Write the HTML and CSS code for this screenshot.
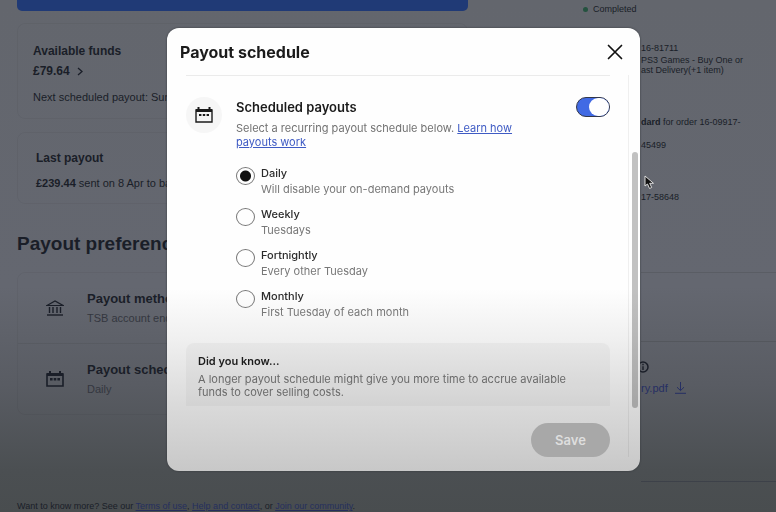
FILE: index.html
```
<!DOCTYPE html>
<html lang="en">
<head>
  <meta charset="UTF-8" />
  <meta name="viewport" content="width=device-width, initial-scale=1.0"/>
  <title>Payouts</title>
  <link rel="stylesheet" href="styles.css">
</head>
<body>

  <!-- Page behind the dialog -->
  <div class="page">
    <main class="funds">
      <button class="withdraw" aria-label="Withdraw funds"></button>

      <section class="card available">
        <h3>Available funds</h3>
        <a class="amount" href="#">£79.64
          <svg width="6" height="9" viewBox="0 0 6 9"><path d="M1 1l4 3.5L1 8" fill="none" stroke="currentColor" stroke-width="1.3"/></svg>
        </a>
        <p>Next scheduled payout: Sunday</p>
      </section>

      <section class="card last">
        <h3>Last payout</h3>
        <p><b>£239.44</b> sent on 8 Apr to bank</p>
      </section>

      <h2>Payout preferences</h2>
      <section class="card prefs">
        <div class="pref">
          <svg width="18" height="16" viewBox="0 0 18 16" fill="none" stroke="currentColor"><path d="M1 5.500L9 1l8 4.500z" stroke-width="1.200"/><path d="M3.500 7v6M7 7v6M11 7v6M14.500 7v6" stroke-width="1.400"/><path d="M1 15h16" stroke-width="1.400"/></svg>
          <div>
            <h4>Payout method</h4>
            <p>TSB account ending</p>
          </div>
        </div>
        <div class="pref">
          <svg width="18" height="16" viewBox="0 0 18 16"><path d="M1 3h16v12H1z" fill="none" stroke="currentColor" stroke-width="1.600"/><path d="M1 2h16v3H1zM3 0h2v3H3zM13 0h2v3h-2zM4 7h2.600v2.400H4zM7.700 7h2.600v2.400H7.700zM11.400 7H14v2.400h-2.600z" fill="currentColor"/></svg>
          <div>
            <h4>Payout schedule</h4>
            <p>Daily</p>
          </div>
        </div>
      </section>

      <p class="more">Want to know more? See our <a href="#">Terms of use</a>, <a href="#">Help and contact</a>, or <a href="#">Join our community</a>.</p>
    </main>

    <aside class="activity">
      <p class="status"><span class="dot"></span>Completed</p>
      <div class="entries">
        <p class="order">16-81711</p>
        <p class="item">PS3 Games - Buy One or<br>ast Delivery(+1 item)</p>
        <p class="label"><b>dard</b> for order 16-09917-</p>
        <p class="ref">45499</p>
        <p class="ref2">17-58648</p>
        <div class="summary">
          <svg width="12" height="12" viewBox="0 0 12 12"><circle cx="6" cy="6" r="5" fill="none" stroke="currentColor" stroke-width="1.500"/><path d="M5.300 2.800h1.400v1.400H5.300zM5.300 5.200h1.400V9H5.300z" fill="currentColor"/></svg>
          <a href="#">ry.pdf
            <svg width="11" height="12" viewBox="0 0 11 12" fill="none" stroke="currentColor"><path d="M5.500 0v8.500M2 5.200l3.500 3.400L9 5.200M0 11.300h11"/></svg>
          </a>
        </div>
      </div>
    </aside>
  </div>

  <!-- Payout schedule dialog -->
  <div class="overlay">
    <div class="modal" role="dialog" aria-labelledby="modalTitle">
      <header class="modal-header">
        <h1 id="modalTitle">Payout schedule</h1>
        <button class="close" aria-label="Close">
          <svg width="16" height="16" viewBox="0 0 16 16"><path d="M1.500 1.500l13 13M14.500 1.500l-13 13" stroke="currentColor" stroke-width="1.700" stroke-linecap="round"/></svg>
        </button>
      </header>

      <div class="modal-main">
        <div class="modal-column">
          <div class="modal-body">
            <div class="schedule">
              <span class="icon">
                <svg width="18" height="16" viewBox="0 0 18 16"><path d="M1 3h16v12H1z" fill="none" stroke="currentColor" stroke-width="1.400"/><path d="M1 2h16v3H1zM2.500 0h2v3h-2zM13.500 0h2v3h-2zM4 7h2.400v2H4zM7.800 7h2.400v2H7.800zM11.600 7H14v2h-2.400z" fill="currentColor"/></svg>
              </span>
              <div class="details">
                <div class="details-top">
                  <label for="scheduled">Scheduled payouts</label>
                  <input type="checkbox" class="switch" id="scheduled" checked>
                </div>
                <p class="intro">Select a recurring payout schedule below. <a href="#">Learn how<br>payouts work</a></p>

                <div class="option">
                  <input type="radio" name="schedule" id="daily" checked>
                  <label for="daily">Daily <small>Will disable your on-demand payouts</small></label>
                </div>
                <div class="option">
                  <input type="radio" name="schedule" id="weekly">
                  <label for="weekly">Weekly <small>Tuesdays</small></label>
                </div>
                <div class="option">
                  <input type="radio" name="schedule" id="fortnightly">
                  <label for="fortnightly">Fortnightly <small>Every other Tuesday</small></label>
                </div>
                <div class="option">
                  <input type="radio" name="schedule" id="monthly">
                  <label for="monthly">Monthly <small>First Tuesday of each month</small></label>
                </div>
              </div>
            </div>

            <div class="tip">
              <h2>Did you know...</h2>
              <p>A longer payout schedule might give you more time to accrue available funds to cover selling costs.</p>
            </div>
          </div>

          <footer class="modal-footer">
            <button class="save" disabled>Save</button>
          </footer>
        </div>
        <div class="track"><div class="thumb"></div></div>
      </div>
    </div>
  </div>

  <!-- Mouse pointer -->
  <svg class="pointer" width="11" height="15" viewBox="0 0 11 15"><path d="M1 1v10l2.500-2 2 4.500 2.200-1-2-4.200H9.500z" fill="#111" stroke="#ddd" stroke-width="1"/></svg>

</body>
</html>
```
FILE: styles.css
```
html, body {
  margin: 0;
  padding: 0;
  height: 100%;
  overflow: hidden;
}

body {
  font-family: "Liberation Sans", Arial, sans-serif;
  font-size: 11px;
  color: #1a1e28;
  background: linear-gradient(#63666d, #646770 56%, #595c63 75%, #4b4f52 92%, #494d4f);
}

h1, h2, h3, h4, p {
  margin: 0;
}

button {
  border: none;
  padding: 0;
  font-family: inherit;
}

/* Page behind the dialog */
.page {
  display: grid;
  grid-template-columns: 5fr 3fr;
  height: 100%;
  overflow: hidden;
}
.funds {
  padding: 0 17px;
  white-space: nowrap;
}
.withdraw {
  display: block;
  width: 100%;
  height: 11px;
  border-radius: 0 0 5px 5px;
  background: #203a76;
}
.card {
  border: 1px solid rgba(0, 0, 0, 0.04);
  border-radius: 8px;
}
.available {
  margin-top: 12px;
  padding: 18px 15px 13px;
}
.available h3 {
  font-size: 12px;
  line-height: 18px;
}
.amount {
  display: block;
  color: inherit;
  font-size: 12px;
  font-weight: bold;
  line-height: 22px;
  text-decoration: none;
}
.amount svg {
  margin-left: 4px;
  vertical-align: -1px;
}
.available p {
  margin-top: 7px;
  line-height: 16px;
}
.last {
  margin-top: 13px;
  padding: 16px 18px 12px;
}
.last h3 {
  font-size: 12px;
  line-height: 18px;
}
.last p {
  margin-top: 8px;
  line-height: 16px;
}
.funds h2 {
  margin-top: 28px;
  font-size: 19px;
  line-height: 24px;
}
.prefs {
  margin-top: 16px;
}
.pref {
  display: flex;
  align-items: center;
  gap: 23px;
  height: 70px;
  padding-left: 28px;
}
.pref + .pref {
  border-top: 1px solid rgba(0, 0, 0, 0.06);
}
.pref h4 {
  font-size: 13px;
  line-height: 18px;
}
.pref p {
  margin-top: 2px;
  line-height: 16px;
  color: #34373f;
}
.more {
  margin-top: 85px;
  font-size: 9px;
  line-height: 12px;
}
.more a {
  color: #252f5e;
}

/* Activity column */
.activity {
  padding-left: 98px;
  font-size: 9px;
  line-height: 10px;
  white-space: nowrap;
}
.status {
  display: flex;
  align-items: center;
  gap: 5px;
  padding-top: 4px;
}
.dot {
  width: 5px;
  height: 5px;
  border-radius: 50%;
  background: #24523f;
}
.entries {
  padding-left: 58px;
}
.order {
  margin-top: 29px;
}
.item {
  margin-top: 2px;
}
.label {
  margin-top: 42px;
}
.ref {
  margin-top: 13px;
}
.ref2 {
  margin-top: 42px;
  padding-bottom: 70px;
  border-bottom: 1px solid #5a5d64;
}
.summary {
  margin-top: 68px;
  padding: 19px 0 85px;
  border-top: 1px solid #54575d;
  border-bottom: 1px solid #3d4149;
}
.summary > svg {
  display: block;
  margin-left: -4px;
}
.summary a {
  display: block;
  margin-top: 7px;
  color: #262f63;
  font-size: 11px;
  line-height: 16px;
  text-decoration: none;
}
.summary a svg {
  margin-left: 4px;
  vertical-align: -2px;
}

/* Dialog */
.overlay {
  position: fixed;
  inset: 0;
  display: flex;
  padding: 28px 136px 41px 167px;
}
.modal {
  flex: 1;
  min-width: 0;
  display: flex;
  flex-direction: column;
  box-sizing: border-box;
  border-radius: 12px;
  background: linear-gradient(#fefefe 59%, #f0f0f0 70%, #dadada 85%, #c8c8c8);
  box-shadow: 0 0 2px #303338;
  color: #1b1b1b;
  font-family: Inter, "Liberation Sans", sans-serif;
}
.modal-header {
  display: flex;
  align-items: center;
  justify-content: space-between;
  height: 47px;
  padding: 0 17px 0 13px;
}
.modal-header h1 {
  font-size: 16px;
  font-weight: 700;
  line-height: 20px;
}
.close {
  display: flex;
  background: none;
  color: #111;
}
.modal-main {
  flex: 1;
  min-height: 0;
  display: flex;
}
.modal-column {
  flex: 1;
  min-width: 0;
  display: flex;
  flex-direction: column;
}
.modal-body {
  flex: 1;
  min-height: 0;
  margin: 0 18px 0 19px;
  border-top: 1px solid #ebebeb;
  overflow: hidden;
}
.schedule {
  display: flex;
  gap: 14px;
  padding-top: 21px;
}
.icon {
  display: flex;
  flex: none;
  align-items: center;
  justify-content: center;
  width: 36px;
  height: 36px;
  border-radius: 50%;
  background: #f6f6f6;
}
.details {
  flex: 1;
}
.details-top {
  display: flex;
  align-items: center;
  justify-content: space-between;
  height: 20px;
}
.details-top label {
  font-size: 13px;
  font-weight: 600;
}
.intro {
  margin: 4px 0 16px;
  font-size: 11px;
  line-height: 14px;
  color: #727272;
}
.intro a {
  color: #3f5bc4;
}

.switch {
  appearance: none;
  display: flex;
  justify-content: flex-end;
  width: 34px;
  height: 20px;
  margin: 0;
  border: 1px solid #33384a;
  border-radius: 10px;
  background: #416ae4;
}
.switch::before {
  content: "";
  width: 20px;
  border-radius: 9px;
  background: #fff;
}

.option {
  display: flex;
  gap: 6px;
  height: 41px;
}
.option input {
  appearance: none;
  flex: none;
  width: 19px;
  height: 18px;
  margin: 2px 0 0;
  border: 1px solid #777;
  border-radius: 50%;
}
.option input:checked {
  background: radial-gradient(circle, #111 5px, transparent 6px);
}
.option label {
  font-size: 11px;
  font-weight: 500;
  line-height: 16px;
  color: #2b2b2b;
}
.option small {
  display: block;
  font-size: 11px;
  font-weight: 400;
  color: #777;
}

.tip {
  margin-top: 14px;
  padding: 10px 12px 20px;
  border-radius: 8px;
  background: rgba(0, 0, 0, 0.03);
}
.tip h2 {
  font-size: 11px;
  font-weight: 600;
  line-height: 16px;
}
.tip p {
  margin-top: 4px;
  font-size: 11px;
  line-height: 13px;
  color: #6a6a6a;
}

.modal-footer {
  display: flex;
  justify-content: flex-end;
  padding: 17px 18px 14px;
}
.save {
  width: 79px;
  height: 34px;
  border-radius: 17px;
  background: #a8a8a8;
  color: #dedede;
  font-size: 13px;
  font-weight: 600;
}

/* Scrollbar */
.track {
  width: 8px;
  margin-bottom: 14px;
  padding: 77px 0 49px 3px;
  border-left: 1px solid rgba(0, 0, 0, 0.06);
}
.thumb {
  width: 6px;
  height: 100%;
  border-radius: 3px;
  background: rgba(0, 0, 0, 0.24);
}

.pointer {
  position: fixed;
  left: 644px;
  top: 175px;
}
```
